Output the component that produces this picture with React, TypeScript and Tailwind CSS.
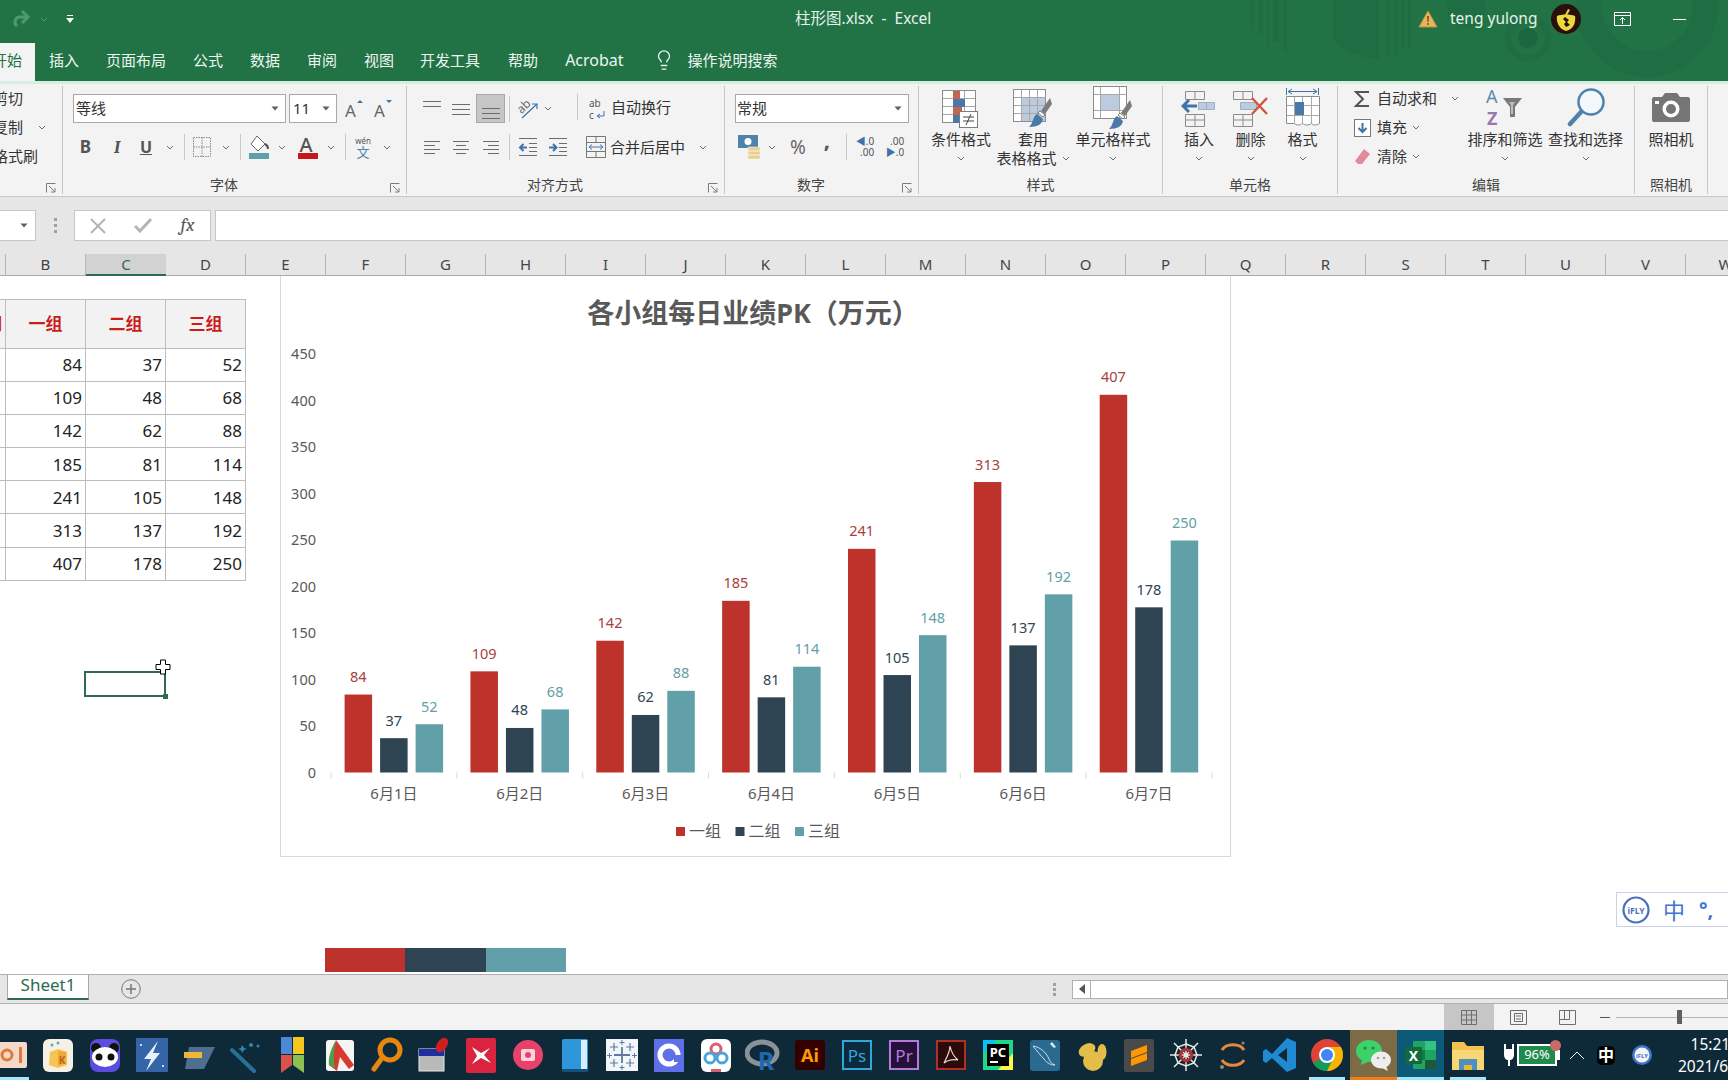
import type { ReactNode } from "react";
import { Lightbulb } from "lucide-react";

const letters = "BCDEFGHIJKLMNOPQRSTUVW".split("");
const rows = [
  [84, 37, 52],
  [109, 48, 68],
  [142, 62, 88],
  [185, 81, 114],
  [241, 105, 148],
  [313, 137, 192],
  [407, 178, 250],
];
const days = ["6月1日", "6月2日", "6月3日", "6月4日", "6月5日", "6月6日", "6月7日"];
const fills = ["#be322c", "#2e4452", "#61a0a8"];
const labelFills = ["#a8403f", "#2e4452", "#61a0a8"];

function Chev() {
  return (
    <svg width="8" height="5" viewBox="0 0 8 5" fill="none" stroke="#6b6b6b" strokeWidth="1" className="shrink-0">
      <path d="M1 1l3 3 3-3" />
    </svg>
  );
}

function Tri() {
  return (
    <svg width="8" height="5" viewBox="0 0 8 5" className="shrink-0">
      <path d="M0.5 0.5h7l-3.5 4z" fill="#5f5f5f" />
    </svg>
  );
}

function Sep() {
  return <span className="h-[26px] w-px shrink-0 bg-[#c8c8c8]" />;
}

function Launcher() {
  return (
    <svg width="10" height="10" viewBox="0 0 10 10" fill="none" stroke="#7a7a7a" className="absolute bottom-[1px] right-[6px]">
      <path d="M0.5 9.5v-9h9" />
      <path d="M3 3l5.5 5.5M9 5v4H5" />
    </svg>
  );
}

function Slot({ className, children }: { className: string; children?: ReactNode }) {
  return <span className={"flex shrink-0 items-center justify-center " + className}>{children}</span>;
}

function Group({
  label,
  className,
  launcher,
  children,
}: {
  label: string;
  className: string;
  launcher?: boolean;
  children: ReactNode;
}) {
  return (
    <div className={"relative flex h-full shrink-0 flex-col border-r border-[#c6c6c6] " + className}>
      <div className="min-h-0 flex-1">{children}</div>
      <div className={"mb-[1px] h-[16px] text-center text-[14px] leading-[16px] text-[#444] " + (launcher ? "pr-[21px]" : "")}>{label}</div>
      {launcher && <Launcher />}
    </div>
  );
}

function Big({ icon, children, className }: { icon: ReactNode; children: ReactNode; className: string }) {
  return (
    <div className={"flex shrink-0 flex-col items-center text-[15px] leading-[19px] text-[#333] " + className}>
      <div className="flex h-[44px] items-center justify-center">{icon}</div>
      {children}
    </div>
  );
}

function AlignV({ lines }: { lines: number[] }) {
  return (
    <svg width="20" height="22" viewBox="0 0 20 22" stroke="#6c6c6c" strokeWidth="1">
      {lines.map((y) => (
        <path key={y} d={`M1 ${y}.5h18`} />
      ))}
    </svg>
  );
}

function AlignH({ d }: { d: string }) {
  return (
    <svg width="16" height="14" viewBox="0 0 16 14" fill="none" stroke="#6c6c6c" strokeWidth="1">
      <path d={d} />
    </svg>
  );
}

function Indent({ flip }: { flip?: boolean }) {
  return (
    <svg width="20" height="20" viewBox="0 0 20 20" fill="none">
      <path d="M1 1.5h18M1 18.5h18M11 6.5h8M11 10.5h8M11 14.5h8" stroke="#6c6c6c" />
      {flip ? (
        <path d="M1 10.5h7M5 7l3.5 3.5L5 14" stroke="#3f74a8" strokeWidth="2" />
      ) : (
        <path d="M9 10.5H2M5.5 7L2 10.5 5.5 14" stroke="#3f74a8" strokeWidth="2" />
      )}
    </svg>
  );
}

function Brush() {
  return (
    <g>
      <path d="M38 12l-9 13 4 3 7-10z" fill="#7b7b7b" />
      <path d="M28 25l5 4-2 2-5-4z" fill="#fff" stroke="#7b7b7b" />
      <path d="M25 28l6 5c-1 5-5 8-14 8 2-2 3-4 4-7 1-3 2-5 4-6z" fill="#4a78a8" />
    </g>
  );
}

function CondIcon() {
  return (
    <svg width="40" height="42" viewBox="0 0 40 42" fill="none">
      <rect x="1.5" y="3.5" width="33" height="32" fill="#fff" stroke="#8c8c8c" />
      <path d="M12.5 4v31M23.5 4v31M2 11.5h32M2 19.5h32M2 27.5h32" stroke="#a8a8a8" />
      <rect x="12" y="4" width="7" height="8" fill="#c2664d" />
      <rect x="12" y="12" width="12" height="8" fill="#4a78a8" />
      <rect x="12" y="20" width="9" height="8" fill="#c2664d" />
      <rect x="12" y="28" width="6" height="8" fill="#4a78a8" />
      <rect x="18.5" y="24.5" width="18" height="16" fill="#fff" stroke="#7c7c7c" />
      <path d="M22 30h11M22 34h11M30 27l-5 11" stroke="#444" />
    </svg>
  );
}

function TableIcon() {
  return (
    <svg width="42" height="44" viewBox="0 0 42 44" fill="none">
      <rect x="1.5" y="3.5" width="32" height="32" fill="#fff" stroke="#8c8c8c" />
      <rect x="9" y="11" width="24" height="24" fill="#bccbde" />
      <path d="M9.5 4v31M17.5 4v31M25.5 4v31M2 11.5h32M2 19.5h32M2 27.5h32" stroke="#a8a8a8" />
      <Brush />
    </svg>
  );
}

function CellIcon() {
  return (
    <svg width="42" height="46" viewBox="0 0 42 46" fill="none">
      <rect x="1.5" y="1.5" width="33" height="32" fill="#fff" stroke="#8c8c8c" />
      <rect x="8" y="9" width="20" height="17" fill="#bccbde" />
      <path d="M8.5 2v31M27.5 2v31M2 9.5h32M2 25.5h32" stroke="#a8a8a8" />
      <g transform="translate(0 3)">
        <Brush />
      </g>
    </svg>
  );
}

function InsertIcon() {
  return (
    <svg width="36" height="40" viewBox="0 0 36 40" fill="none">
      <path d="M4.5 3.5h19v8h-19zM14 4v7M4.5 26.5h19v12h-19zM4.5 32h19M14 27v11" stroke="#8c8c8c" />
      <path d="M17.5 14.5h16v7h-16zM25.5 15v6" fill="#bccbde" stroke="#9fb0c4" />
      <path d="M16 18H3M8 12l-6 6 6 6" stroke="#3f74a8" strokeWidth="3" />
    </svg>
  );
}

function DeleteIcon() {
  return (
    <svg width="38" height="40" viewBox="0 0 38 40" fill="none">
      <path d="M1.5 3.5h19v8h-19zM11 4v7M1.5 26.5h19v12h-19zM1.5 32h19M11 27v11" stroke="#8c8c8c" />
      <path d="M8.5 14.5h16v7h-16z" fill="#bccbde" stroke="#9fb0c4" />
      <path d="M20 10l15 16M35 10L20 26" stroke="#d0573f" strokeWidth="2.5" />
    </svg>
  );
}

function FormatIcon() {
  return (
    <svg width="36" height="42" viewBox="0 0 36 42" fill="none">
      <path d="M1.5 1v7M33.5 1v7M3 4.5h29M7 2L3 4.5 7 7M28 2l4 2.5L28 7" stroke="#3f74a8" />
      <path d="M1.5 9.5h33v27c-3 2-6 2-8 0-3 2-6 2-9 0-3 2-6 2-8 0h-8z" fill="#fff" stroke="#8c8c8c" />
      <path d="M9.5 10v27M17.5 10v27M26.5 10v27M2 18.5h32M2 28.5h32" stroke="#a8a8a8" />
      <rect x="10" y="15" width="9" height="13" fill="#4a78a8" />
    </svg>
  );
}

function SortIcon() {
  return (
    <svg width="40" height="40" viewBox="0 0 40 40">
      <text x="1" y="15" fontSize="18" fill="#5b8bb5">
        A
      </text>
      <text x="2" y="37" fontSize="18" fontWeight="700" fill="#9a78ab">
        Z
      </text>
      <path d="M18 10h19l-7 9v10h-5V19z" fill="#7a7a7a" />
      <path d="M24 14h6l-2 3v9h-2v-9z" fill="#bdbdbd" />
    </svg>
  );
}

function FindIcon() {
  return (
    <svg width="38" height="42" viewBox="0 0 38 42" fill="none">
      <circle cx="24" cy="15" r="12.5" fill="#f3f8fc" stroke="#4f81ad" strokeWidth="2.5" />
      <path d="M14 25L3 37" stroke="#4f81ad" strokeWidth="4.5" strokeLinecap="round" />
    </svg>
  );
}

function CameraIcon() {
  return (
    <svg width="38" height="32" viewBox="0 0 38 32">
      <path d="M2 5h8l3-4h12l3 4h8a2 2 0 0 1 2 2v21a2 2 0 0 1-2 2H2a2 2 0 0 1-2-2V7a2 2 0 0 1 2-2z" fill="#757575" />
      <circle cx="19" cy="17" r="8.5" fill="#fff" />
      <circle cx="19" cy="17" r="5" fill="#757575" />
      <rect x="3" y="9" width="4" height="3" fill="#fff" />
    </svg>
  );
}

function RibbonGroups() {
  return (
    <div className="flex h-[112px] bg-[#f3f3f3] py-[2px] text-[15px] text-[#333]">
      {/* clipboard, cut off by the left window edge */}
      <Group label="" className="w-[63px]" launcher>
        <div className="-ml-[7px] -mt-[2px] whitespace-nowrap leading-[29px]">
          <div className="h-[29px]">剪切</div>
          <div className="flex h-[29px] items-center gap-[15px]">
            复制
            <Chev />
          </div>
          <div className="h-[29px]">格式刷</div>
        </div>
      </Group>

      <Group label="字体" className="w-[344px]" launcher>
        <div className="flex h-[29px] pl-[10px] mt-[8px]">
          <div className="flex w-[213px] items-center justify-between border border-[#a9a9a9] bg-white pl-[2px] pr-[6px]">
            等线
            <Tri />
          </div>
          <div className="ml-[3px] flex w-[48px] items-center justify-between border border-[#a9a9a9] bg-white pl-[3px] pr-[6px]">
            11
            <Tri />
          </div>
          <Slot className="w-[33px]">
            <svg width="18" height="20" viewBox="0 0 18 20">
              <text x="0" y="18" fontSize="17" fill="#666">
                A
              </text>
              <path d="M12 4l3-3 3 3z" fill="#3f74a8" />
            </svg>
          </Slot>
          <Slot className="w-[25px]">
            <svg width="18" height="20" viewBox="0 0 18 20">
              <text x="0" y="18" fontSize="17" fill="#666">
                A
              </text>
              <path d="M12 1l3 3 3-3z" fill="#3f74a8" />
            </svg>
          </Slot>
        </div>
        <div className="mt-[10px] flex h-[28px] pl-[7px]">
          <Slot className="w-[31px] text-[17px] font-bold text-[#555]">B</Slot>
          <Slot className="w-[32px] font-serif text-[18px] font-bold italic text-[#555]">I</Slot>
          <Slot className="w-[26px] text-[16px] font-bold text-[#555] underline">U</Slot>
          <Slot className="w-[22px]">
            <Chev />
          </Slot>
          <Slot className="w-[7px]">
            <Sep />
          </Slot>
          <Slot className="w-[28px]">
            <svg width="18" height="20" viewBox="0 0 18 20" fill="none" stroke="#8a8a8a" strokeDasharray="1.5 1">
              <path d="M0.5 0.5h17v19h-17zM0.5 10h17M9 0.5v19" />
            </svg>
          </Slot>
          <Slot className="w-[19px]">
            <Chev />
          </Slot>
          <Slot className="w-[10px]">
            <Sep />
          </Slot>
          <Slot className="w-[27px]">
            <svg width="22" height="24" viewBox="0 0 22 24" fill="none">
              <path d="M9 1l8 8-7 7-7-7z" fill="#fff" stroke="#666" />
              <path d="M17 9c2 1 3 3 3 5" stroke="#555" strokeWidth="2" />
              <rect x="1" y="18" width="20" height="6" fill="#61a0a8" />
            </svg>
          </Slot>
          <Slot className="w-[19px]">
            <Chev />
          </Slot>
          <Slot className="w-[33px]">
            <svg width="20" height="24" viewBox="0 0 20 24">
              <text x="1.5" y="17" fontSize="20" fontWeight="500" fill="#555">
                A
              </text>
              <rect y="18" width="20" height="6" fill="#c8161d" />
            </svg>
          </Slot>
          <Slot className="w-[14px]">
            <Chev />
          </Slot>
          <Slot className="w-[14px]">
            <Sep />
          </Slot>
          <Slot className="w-[22px]">
            <span className="flex flex-col items-center leading-none">
              <span className="text-[8px] leading-[9px] text-[#555]">wén</span>
              <span className="text-[13px] leading-[14px] text-[#4f81ad]">文</span>
            </span>
          </Slot>
          <Slot className="w-[26px]">
            <Chev />
          </Slot>
        </div>
      </Group>

      <Group label="对齐方式" className="w-[318px]" launcher>
        <div className="mt-[8px] flex h-[29px] pl-[10px]">
          <Slot className="w-[29px]">
            <AlignV lines={[3, 8]} />
          </Slot>
          <Slot className="w-[30px]">
            <AlignV lines={[6, 11, 16]} />
          </Slot>
          <Slot className="w-[29px] border border-[#a9a9a9] bg-[#c6c6c6]">
            <AlignV lines={[10, 15, 20]} />
          </Slot>
          <Slot className="w-[8px]">
            <Sep />
          </Slot>
          <Slot className="w-[30px]">
            <svg width="22" height="22" viewBox="0 0 22 22" fill="none">
              <text x="1" y="12" fontSize="12" fill="#666" transform="rotate(-45 8 10)">
                ab
              </text>
              <path d="M5 20L20 6M15 6h5v5" stroke="#3f74a8" strokeWidth="1.2" />
            </svg>
          </Slot>
          <Slot className="w-[10px]">
            <Chev />
          </Slot>
          <Slot className="w-[24px]" />
          <Sep />
          <Slot className="ml-[5px] w-[28px]">
            <svg width="20" height="22" viewBox="0 0 20 22" fill="none">
              <text x="2" y="9" fontSize="10" fill="#555">
                ab
              </text>
              <text x="2" y="21" fontSize="10" fill="#555">
                c
              </text>
              <path d="M17 13v5h-6M13 16l-3 2 3 2" stroke="#3f74a8" />
            </svg>
          </Slot>
          <span className="leading-[27px]">自动换行</span>
        </div>
        <div className="mt-[10px] flex h-[28px] pl-[10px]">
          <Slot className="w-[29px]">
            <AlignH d="M0 1.5h16M0 5.5h11M0 9.5h16M0 13.5h11" />
          </Slot>
          <Slot className="w-[30px]">
            <AlignH d="M0 1.5h16M3 5.5h10M0 9.5h16M3 13.5h10" />
          </Slot>
          <Slot className="w-[29px]">
            <AlignH d="M0 1.5h16M5 5.5h11M0 9.5h16M5 13.5h11" />
          </Slot>
          <Slot className="w-[8px]">
            <Sep />
          </Slot>
          <Slot className="w-[30px]">
            <Indent />
          </Slot>
          <Slot className="w-[30px]">
            <Indent flip />
          </Slot>
          <Slot className="ml-[9px] w-[28px]">
            <svg width="20" height="22" viewBox="0 0 20 22" fill="none">
              <path d="M0.5 0.5h19v21h-19zM0.5 6.5h19M0.5 15.5h19M10 1v5M10 16v5" stroke="#777" />
              <path d="M3 11h14M6 8.5L3 11l3 2.5M14 8.5l3 2.5-3 2.5" stroke="#3f74a8" />
            </svg>
          </Slot>
          <span className="leading-[28px]">合并后居中</span>
          <Slot className="ml-[14px] w-[8px]">
            <Chev />
          </Slot>
        </div>
      </Group>

      <Group label="数字" className="w-[194px]" launcher>
        <div className="mt-[8px] flex h-[29px] pl-[10px]">
          <div className="flex w-[174px] items-center justify-between border border-[#a9a9a9] bg-white pl-[1px] pr-[6px]">
            常规
            <Tri />
          </div>
        </div>
        <div className="mt-[10px] flex h-[28px] pl-[10px]">
          <Slot className="w-[28px]">
            <svg width="22" height="24" viewBox="0 0 22 24">
              <rect x="0" y="0" width="20" height="13" fill="#4f81ad" />
              <circle cx="10" cy="6.5" r="3.5" fill="#fff" />
              <path d="M10 12h12v4H10zM10 16h12v4H10zM10 20h12v4H10z" fill="#e9cf8a" stroke="#f3f3f3" strokeWidth="0.6" />
            </svg>
          </Slot>
          <Slot className="w-[18px]">
            <Chev />
          </Slot>
          <Slot className="w-[34px] text-[19px] text-[#666]">%</Slot>
          <Slot className="w-[24px] text-[22px] font-bold text-[#555]">
            <span className="-mt-[16px]">,</span>
          </Slot>
          <Slot className="w-[15px]">
            <Sep />
          </Slot>
          <Slot className="w-[22px]">
            <span className="flex flex-col items-end text-[10px] leading-[11px] text-[#555]">
              <span>
                <span className="text-[#3f74a8]">◀</span>.0
              </span>
              <span>.00</span>
            </span>
          </Slot>
          <Slot className="w-[38px]">
            <span className="flex flex-col items-end text-[10px] leading-[11px] text-[#555]">
              <span>.00</span>
              <span>
                <span className="text-[#3f74a8]">▶</span>.0
              </span>
            </span>
          </Slot>
        </div>
      </Group>

      <Group label="样式" className="w-[244px]">
        <div className="flex">
          <Big icon={<CondIcon />} className="w-[84px]">
            <span>条件格式</span>
            <span className="flex h-[19px] items-center">
              <Chev />
            </span>
          </Big>
          <Big icon={<TableIcon />} className="w-[60px]">
            <span>套用</span>
            <span className="flex items-center gap-[5px] whitespace-nowrap">
              表格格式
              <Chev />
            </span>
          </Big>
          <Big icon={<CellIcon />} className="w-[100px]">
            <span>单元格样式</span>
            <span className="flex h-[19px] items-center">
              <Chev />
            </span>
          </Big>
        </div>
      </Group>

      <Group label="单元格" className="w-[175px]">
        <div className="flex pl-[10px]">
          {[
            { t: "插入", i: <InsertIcon />, c: "w-[52px]" },
            { t: "删除", i: <DeleteIcon />, c: "w-[51px]" },
            { t: "格式", i: <FormatIcon />, c: "w-[53px]" },
          ].map((b) => (
            <Big key={b.t} icon={b.i} className={b.c}>
              <span>{b.t}</span>
              <span className="flex h-[19px] items-center">
                <Chev />
              </span>
            </Big>
          ))}
        </div>
      </Group>

      <Group label="编辑" className="w-[297px]">
        <div className="flex">
          <div className="-mt-[2px] w-[129px] shrink-0 pl-[12px]">
            <div className="flex h-[29px] items-center">
              <Slot className="w-[24px]">
                <svg width="16" height="18" viewBox="0 0 16 18" fill="none" stroke="#555" strokeWidth="2">
                  <path d="M15 2H2l7 7-7 7h13" />
                </svg>
              </Slot>
              <span className="ml-[3px]">自动求和</span>
              <Slot className="ml-[14px] w-[8px]">
                <Chev />
              </Slot>
            </div>
            <div className="flex h-[29px] items-center">
              <Slot className="w-[24px]">
                <svg width="17" height="18" viewBox="0 0 17 18" fill="none">
                  <rect x="0.5" y="0.5" width="16" height="17" fill="#fff" stroke="#777" />
                  <path d="M8.5 4v9M4.5 9l4 4 4-4" stroke="#3f74a8" strokeWidth="2" />
                </svg>
              </Slot>
              <span className="ml-[3px]">填充</span>
              <Slot className="ml-[5px] w-[8px]">
                <Chev />
              </Slot>
            </div>
            <div className="flex h-[29px] items-center">
              <Slot className="w-[24px]">
                <svg width="17" height="17" viewBox="0 0 17 17">
                  <path d="M10 1l6 5-8 10H4L1 13z" fill="#e28a9a" />
                </svg>
              </Slot>
              <span className="ml-[3px]">清除</span>
              <Slot className="ml-[5px] w-[8px]">
                <Chev />
              </Slot>
            </div>
          </div>
          <Big icon={<SortIcon />} className="w-[76px] whitespace-nowrap">
            <span>排序和筛选</span>
            <span className="flex h-[19px] items-center">
              <Chev />
            </span>
          </Big>
          <Big icon={<FindIcon />} className="w-[85px] whitespace-nowrap">
            <span>查找和选择</span>
            <span className="flex h-[19px] items-center">
              <Chev />
            </span>
          </Big>
        </div>
      </Group>

      <Group label="照相机" className="w-[73px]">
        <Big icon={<CameraIcon />} className="w-full">
          <span>照相机</span>
        </Big>
      </Group>
    </div>
  );
}

function TitleBar() {
  return (
    <div className="relative h-[81px] overflow-hidden bg-[#217346] text-white">
      {/* decoration of the Office theme, behind the bar */}
      <svg className="absolute right-0 top-0" width="500" height="81" viewBox="1228 0 500 81" fill="#1f6e43">
        <path d="M1251 0h3v30h-3zM1258 0h5v34h-5zM1267 0h2v50h-2zM1273 0h6v42h-6zM1284 0h3v52h-3z" />
        <path d="M1333 0h46v60c-16-2-34-8-46-20z" />
        <path d="M1387 0h3v56h-3zM1394 0h3v56h-3zM1401 0h3v50h-3zM1408 0h3v48h-3z" />
        <path d="M1448 0h36c4 14-4 28-18 28s-22-14-18-28z" />
        <circle cx="1528" cy="38" r="10" fill="#1c6640" />
        <circle cx="1528" cy="38" r="20" fill="none" stroke="#1f6e43" strokeWidth="7" />
        <circle cx="1647" cy="6" r="58" fill="none" stroke="#1f6e43" strokeWidth="26" />
      </svg>
      <div className="relative flex h-[43px] items-center pb-[5px]">
        <Slot className="ml-[9px] w-[24px]">
          <svg width="20" height="18" viewBox="0 0 20 18" fill="none" stroke="#4d9a72" strokeWidth="3">
            <path d="M15 7H9a5 5 0 0 0-3 9" />
            <path d="M11 1l6 6-6 6" />
          </svg>
        </Slot>
        <Slot className="ml-[7px] w-[8px]">
          <svg width="8" height="5" viewBox="0 0 8 5" fill="none" stroke="#4d9a72">
            <path d="M1 1l3 3 3-3" />
          </svg>
        </Slot>
        <Slot className="ml-[17px] w-[10px]">
          <svg width="8" height="8" viewBox="0 0 8 8" fill="#fff">
            <path d="M1 0h6v1H1zM0 3h8L4 8z" />
          </svg>
        </Slot>
        <span className="ml-[720px] w-[137px] whitespace-pre text-[15.5px] text-[#e6f2ea]">柱形图.xlsx  -  Excel</span>
        <Slot className="ml-[484px] w-[24px]">
          <svg width="20" height="18" viewBox="0 0 20 18">
            <path d="M10 1l9 16H1z" fill="#e8b65a" stroke="#c58f37" />
            <path d="M9.2 6h1.6l-.3 6h-1zM9.2 13.2h1.6v1.6H9.2z" fill="#5a4015" />
          </svg>
        </Slot>
        <span className="ml-[10px] w-[88px] whitespace-nowrap text-[15.5px] text-[#e6f2ea]">teng yulong</span>
        <Slot className="ml-[13px] w-[30px]">
          <svg width="30" height="30" viewBox="0 0 30 30">
            <circle cx="15" cy="15" r="15" fill="#2a0f0a" />
            <path d="M6 12c5-2 13-2 18 0 1 6-1 13-9 15-7-2-10-9-9-15z" fill="#ecd93b" />
            <path d="M14 11l3-6 2 1-3 5z" fill="#ecd93b" />
            <path d="M14 13l4 3-2 2 3 3-4 2-2-3 2-2-3-3z" fill="#2a0f0a" />
          </svg>
        </Slot>
        <Slot className="ml-[31px] w-[20px]">
          <svg width="17" height="14" viewBox="0 0 17 14" fill="none" stroke="#fff">
            <path d="M0.5 0.5h16v13h-16zM0.5 3.5h16M8.5 12V6M6 8l2.5-2.5L11 8" />
          </svg>
        </Slot>
        <Slot className="ml-[37px] w-[20px]">
          <span className="h-px w-[13px] bg-white" />
        </Slot>
      </div>
      <div className="relative flex h-[38px] items-center pb-[4px] text-[15px] text-[#eef6f1]">
        <div className="flex h-[38px] w-[35px] items-center justify-end self-start bg-[#f3f3f3] pb-[4px] pr-[13px] text-[#217346]">
          <span className="whitespace-nowrap">开始</span>
        </div>
        <span className="ml-[14px]">插入</span>
        <span className="ml-[27px]">页面布局</span>
        <span className="ml-[27px]">公式</span>
        <span className="ml-[27px]">数据</span>
        <span className="ml-[27px]">审阅</span>
        <span className="ml-[27px]">视图</span>
        <span className="ml-[26px]">开发工具</span>
        <span className="ml-[28px]">帮助</span>
        <span className="ml-[27px] text-[16px]">Acrobat</span>
        <Lightbulb className="ml-[29px] h-[22px] w-[22px]" strokeWidth={1.4} />
        <span className="ml-[13px]">操作说明搜索</span>
      </div>
    </div>
  );
}

function FormulaBar() {
  return (
    <div className="bg-[#e6e6e6]">
      <div className="h-[14px] border-t border-[#c6c6c6]" />
      <div className="flex h-[32px] items-start">
        <div className="flex h-[31px] w-[36px] items-center justify-end border border-l-0 border-[#c6c6c6] bg-white pr-[7px]">
          <Tri />
        </div>
        <Slot className="h-[31px] w-[38px]">
          <span className="flex flex-col gap-[3px]">
            <span className="h-[3px] w-[3px] bg-[#a0a0a0]" />
            <span className="h-[3px] w-[3px] bg-[#a0a0a0]" />
            <span className="h-[3px] w-[3px] bg-[#a0a0a0]" />
          </span>
        </Slot>
        <div className="flex h-[31px] w-[137px] items-center border border-[#c6c6c6] bg-white">
          <Slot className="w-[45px]">
            <svg width="16" height="16" viewBox="0 0 16 16" stroke="#b5b5b5" strokeWidth="2">
              <path d="M1 1l14 14M15 1L1 15" />
            </svg>
          </Slot>
          <Slot className="w-[45px]">
            <svg width="18" height="15" viewBox="0 0 18 15" fill="none" stroke="#b5b5b5" strokeWidth="3">
              <path d="M1 8l5 5L17 1" />
            </svg>
          </Slot>
          <Slot className="w-[45px] font-serif text-[19px] italic text-[#555]">fx</Slot>
        </div>
        <div className="ml-[4px] h-[31px] flex-1 border-y border-l border-[#c6c6c6] bg-white" />
      </div>
      <div className="h-[12px]" />
      <div className="flex h-[22px] border-b border-[#a9a9a9] text-[15px] leading-[21px] text-[#444]">
        <div className="w-[6px] shrink-0 border-r border-[#b5b5b5]" />
        {letters.map((l) =>
          l === "C" ? (
            <div key={l} className="h-[22px] w-[80px] shrink-0 border-b-2 border-[#2f6b4d] bg-[#d2d2d2] text-center text-[#2f6b4d]">
              {l}
            </div>
          ) : (
            <div key={l} className="w-[80px] shrink-0 border-r border-[#b5b5b5] text-center">
              {l}
            </div>
          ),
        )}
      </div>
    </div>
  );
}

function DataTable() {
  const cell = "border-b border-r border-[#bdbdbd]";
  return (
    <div className="mt-[23px] w-[246px] shrink-0 text-[17px] text-[#222]">
      <div className="flex h-[50px] border-t border-[#bdbdbd] bg-[#f2f2f2] text-[17px] font-bold text-[#cc1b1b]">
        <div className={"flex w-[6px] items-center justify-end overflow-hidden pr-[3px] " + cell}>
          <span className="shrink-0">期</span>
        </div>
        {["一组", "二组", "三组"].map((h) => (
          <div key={h} className={"flex w-[80px] items-center justify-center " + cell}>
            {h}
          </div>
        ))}
      </div>
      {rows.map((r) => (
        <div key={r[0]} className="flex h-[33.1px]">
          <div className={"w-[6px] " + cell} />
          {r.map((v, i) => (
            <div key={i} className={"flex w-[80px] items-center justify-end pr-[3px] " + cell}>
              {v}
            </div>
          ))}
        </div>
      ))}
    </div>
  );
}

function Chart() {
  const x0 = 331;
  const base = 772.5;
  const step = 125.85;
  return (
    <div className="absolute left-[280px] top-0 h-[581px] w-[951px] border-x border-b border-[#d9d9d9] bg-white">
      <svg width="951" height="581" viewBox="281 276 951 581" className="block">
        <text x="753" y="323" textAnchor="middle" fontSize="27" fontWeight="700" fill="#595959">
          各小组每日业绩PK（万元）
        </text>
        {[0, 1, 2, 3, 4, 5, 6, 7, 8, 9].map((n) => (
          <text key={n} x="316" y={base - n * 46.5 + 5} textAnchor="end" fontSize="14.5" fill="#595959">
            {n * 50}
          </text>
        ))}
        <path d={`M${x0} ${base}.5H1211`} stroke="#d9d9d9" />
        {[0, 1, 2, 3, 4, 5, 6, 7].map((n) => (
          <path key={n} d={`M${x0 + n * step} ${base}v6`} stroke="#d9d9d9" />
        ))}
        {rows.map((r, i) => (
          <g key={i}>
            {r.map((v, j) => {
              const x = x0 + i * step + 13.6 + j * 35.5;
              const h = v * 0.928;
              return (
                <g key={j}>
                  <rect x={x} y={base - h} width="27.5" height={h} fill={fills[j]} />
                  <text x={x + 13.7} y={base - h - 12.5} textAnchor="middle" fontSize="14.5" fill={labelFills[j]}>
                    {v}
                  </text>
                </g>
              );
            })}
            <text x={x0 + i * step + step / 2} y="799" textAnchor="middle" fontSize="15" fill="#595959">
              {days[i]}
            </text>
          </g>
        ))}
        {["一组", "二组", "三组"].map((t, i) => (
          <g key={t}>
            <rect x={676 + i * 59.5} y="827" width="9" height="9" fill={fills[i]} />
            <text x={689 + i * 59.5} y="837" fontSize="16" fill="#595959">
              {t}
            </text>
          </g>
        ))}
      </svg>
    </div>
  );
}

function Sheet() {
  return (
    <div className="relative flex h-[698px] flex-col overflow-hidden bg-white">
      <DataTable />
      <div className="ml-[325px] mt-[367px] flex h-[24px] w-[241px]">
        <div className="flex-1 bg-[#be322c]" />
        <div className="flex-1 bg-[#2e4452]" />
        <div className="flex-1 bg-[#61a0a8]" />
      </div>
      <Chart />
      {/* selected cell */}
      <div className="absolute left-[84px] top-[395px] h-[26px] w-[82px] border-2 border-[#2f6b4d]" />
      <div className="absolute left-[163px] top-[418px] h-[5px] w-[5px] bg-[#2f6b4d]" />
      {/* mouse cursor */}
      <svg className="absolute left-[155px] top-[383px]" width="16" height="16" viewBox="0 0 16 16">
        <path d="M5.5 1h5v4.5H15v5h-4.5V15h-5v-4.5H1v-5h4.5z" fill="#fff" stroke="#000" />
      </svg>
      {/* floating input-method bar */}
      <div className="absolute left-[1616px] top-[616px] flex h-[35px] w-[130px] items-center border border-[#c9d3e6] bg-white text-[#3f74d0]">
        <svg className="ml-[5px] shrink-0" width="28" height="28" viewBox="0 0 28 28" fill="none">
          <circle cx="14" cy="14" r="12.5" stroke="#4a6fc0" strokeWidth="2.2" />
          <text x="14" y="17.5" textAnchor="middle" fontSize="8.5" fontWeight="700" fill="#4a6fc0">
            iFLY
          </text>
        </svg>
        <span className="ml-[13px] text-[22px] leading-none">中</span>
        <span className="ml-[14px] text-[20px] font-bold leading-none">°,</span>
      </div>
    </div>
  );
}

function SheetTabs() {
  return (
    <div className="flex h-[30px] border-y border-[#b0b0b0] bg-[#e6e6e6]">
      <div className="ml-[7px] flex h-[25px] w-[82px] items-start justify-center border-x border-b-2 border-x-[#a9a9a9] border-b-[#2f6b4d] bg-white text-[17px] leading-[20px] text-[#2f6b4d]">
        Sheet1
      </div>
      <Slot className="ml-[31px] h-[28px] w-[22px]">
        <svg width="20" height="20" viewBox="0 0 20 20" fill="none" stroke="#777">
          <circle cx="10" cy="10" r="9.3" />
          <path d="M10 5v10M5 10h10" strokeWidth="1.5" />
        </svg>
      </Slot>
      <div className="ml-auto flex h-full w-[676px] items-center">
        <span className="ml-[1px] flex flex-col gap-[2px]">
          <span className="h-[3px] w-[3px] bg-[#a0a0a0]" />
          <span className="h-[3px] w-[3px] bg-[#a0a0a0]" />
          <span className="h-[3px] w-[3px] bg-[#a0a0a0]" />
        </span>
        <div className="ml-[16px] flex h-[19px] flex-1 border border-[#b0b0b0] bg-white">
          <Slot className="w-[18px] border-r border-[#b0b0b0]">
            <svg width="6" height="10" viewBox="0 0 6 10">
              <path d="M6 0v10L0 5z" fill="#555" />
            </svg>
          </Slot>
        </div>
      </div>
    </div>
  );
}

function StatusBar() {
  return (
    <div className="flex h-[26px] bg-[#f3f3f3]">
      <div className="ml-auto flex h-full w-[284px] items-center">
        <Slot className="h-full w-[50px] bg-[#c6c6c6]">
          <svg width="16" height="15" viewBox="0 0 16 15" fill="none" stroke="#6e6e6e">
            <path d="M0.5 0.5h15v14h-15zM0.5 5h15M0.5 10h15M5.5 1v13M10.5 1v13" />
          </svg>
        </Slot>
        <Slot className="w-[49px]">
          <svg width="17" height="15" viewBox="0 0 17 15" fill="none" stroke="#6e6e6e">
            <path d="M0.5 0.5h16v14h-16zM4.5 3.5h8v8h-8zM6 6h5M6 9h5" />
          </svg>
        </Slot>
        <Slot className="w-[49px]">
          <svg width="17" height="15" viewBox="0 0 17 15" fill="none" stroke="#6e6e6e">
            <path d="M0.5 0.5h16v14h-16zM0.5 9.5h10V1M5.5 1v8.5" />
          </svg>
        </Slot>
        <span className="ml-[8px] h-px w-[10px] bg-[#555]" />
        <div className="ml-[6px] flex h-px flex-1 items-center bg-[#b5b5b5]">
          <span className="ml-[61px] h-[14px] w-[5px] bg-[#606060]" />
        </div>
      </div>
    </div>
  );
}

/* task bar icons, drawn on a 36 box */
const taskIcons: { key: string; icon: ReactNode; cls?: string; bar?: string }[] = [
  {
    key: "photo",
    bar: "w-[36px] bg-[#a9e6f5]",
    icon: (
      <g>
        <rect x="2" y="5" width="32" height="26" rx="2" fill="#f4d9c8" />
        <circle cx="14" cy="18" r="5" fill="none" stroke="#e07a3c" strokeWidth="3" />
        <rect x="26" y="10" width="3" height="16" fill="#e07a3c" />
      </g>
    ),
  },
  {
    key: "k",
    icon: (
      <g>
        <rect x="3" y="2" width="30" height="33" rx="6" fill="#f6f1e4" />
        <path d="M10 15l8-3 9 3v13l-9 3-9-3z" fill="#f5c451" />
        <path d="M18 14v15l8-3V15z" fill="#eea93a" />
        <circle cx="12" cy="8" r="1.5" fill="#5aa9d6" />
        <circle cx="18" cy="6" r="1.5" fill="#5aa9d6" />
        <text x="22" y="27" fontSize="10" fontWeight="700" fill="#b9641c" textAnchor="middle">
          K
        </text>
      </g>
    ),
  },
  {
    key: "panda",
    icon: (
      <g>
        <rect x="3" y="2" width="30" height="33" rx="8" fill="#5a4de0" />
        <circle cx="9" cy="11" r="5" fill="#111" />
        <circle cx="27" cy="11" r="5" fill="#111" />
        <ellipse cx="18" cy="20" rx="13" ry="10" fill="#fff" />
        <circle cx="12" cy="20" r="3.5" fill="#111" />
        <circle cx="24" cy="20" r="3.5" fill="#111" />
      </g>
    ),
  },
  {
    key: "bolt",
    icon: (
      <g>
        <rect x="2" y="1" width="32" height="34" fill="#3565a8" />
        <path d="M24 4L10 22h7l-5 12 14-18h-7z" fill="#e6eef8" />
        <circle cx="7" cy="8" r="1" fill="#fff" />
        <circle cx="29" cy="29" r="1" fill="#fff" />
      </g>
    ),
  },
  {
    key: "slate",
    icon: (
      <g>
        <path d="M8 10h26l-11 22H4z" fill="#4f6f8f" />
        <rect x="3" y="15" width="18" height="6" fill="#f0b63a" />
      </g>
    ),
  },
  {
    key: "wand",
    icon: (
      <g>
        <path d="M4 13l22 21" stroke="#2a6f96" strokeWidth="4" strokeLinecap="round" />
        <path d="M14 8l2 3 3 1-3 1-2 3-1-3-3-1 3-1z" fill="#2a86b8" />
        <circle cx="23" cy="8" r="2" fill="#2a86b8" />
        <circle cx="30" cy="9" r="1.5" fill="#2a86b8" />
      </g>
    ),
  },
  {
    key: "mark",
    icon: (
      <g>
        <rect x="6" y="0" width="11" height="17" fill="#4d88d8" />
        <rect x="18" y="0" width="11" height="17" fill="#f3c81f" />
        <path d="M6 18h11v10l-11 8z" fill="#d9534a" />
        <path d="M18 18h11v18l-11-8z" fill="#8cc152" />
      </g>
    ),
  },
  {
    key: "fan",
    icon: (
      <g>
        <rect x="4" y="3" width="28" height="31" rx="3" fill="#f5f5f5" />
        <path d="M14 3l18 25-5 4-9-12-3 14-8-6c2-8 5-17 7-25z" fill="#d93a2f" />
        <path d="M14 3C9 12 6 20 7 28l6 3c-2-9-1-19 1-28z" fill="#4aa24a" />
      </g>
    ),
  },
  {
    key: "search",
    icon: (
      <g fill="none" stroke="#e8870f">
        <circle cx="21" cy="13" r="10" strokeWidth="5" />
        <path d="M13 21L5 32" strokeWidth="5" strokeLinecap="round" />
      </g>
    ),
  },
  {
    key: "pin",
    icon: (
      <g>
        <rect x="3" y="12" width="25" height="22" fill="#b9b9b9" stroke="#e7e7e7" />
        <rect x="3" y="12" width="25" height="7" fill="#1f2fa0" />
        <ellipse cx="26" cy="8" rx="5" ry="8" fill="#d11e1e" transform="rotate(35 26 8)" />
      </g>
    ),
  },
  {
    key: "xmind",
    icon: (
      <g>
        <rect x="3" y="1" width="30" height="35" rx="2" fill="#d9233f" />
        <path d="M9 10l9 6 9-5-6 7 7 8-10-5-9 6 5-8z" fill="#fff" />
      </g>
    ),
  },
  {
    key: "pinkcam",
    icon: (
      <g>
        <circle cx="18" cy="18" r="15" fill="#e8426b" />
        <rect x="11" y="12" width="14" height="12" rx="2" fill="#f7d3dc" />
        <circle cx="18" cy="18" r="3" fill="#e8426b" />
      </g>
    ),
  },
  {
    key: "book",
    icon: (
      <g>
        <rect x="5" y="2" width="26" height="33" rx="2" fill="#2e97dc" />
        <path d="M24 3h6v31h-6z" fill="#d9eefb" />
        <rect x="5" y="32" width="26" height="3" fill="#14507c" />
      </g>
    ),
  },
  {
    key: "tableau",
    icon: (
      <g stroke="#5a7ba5">
        <rect x="2" y="2" width="32" height="32" fill="#f2f6f8" stroke="none" />
        <path d="M18 10v16M10 18h16" strokeWidth="1.8" />
        <path d="M10 6v8M6 10h8M26 6v8M22 10h8M10 22v8M6 26h8M26 22v8M22 26h8" strokeWidth="1.2" />
        <path d="M18 3v5M15.5 5.5h5M18 28v5M15.5 30.5h5M5.5 16v5M3 18.5h5M30.5 16v5M28 18.5h5" strokeWidth="1" />
      </g>
    ),
  },
  {
    key: "cloud",
    icon: (
      <g>
        <rect x="3" y="2" width="30" height="33" fill="#5f6fe8" />
        <circle cx="18" cy="18" r="9" fill="none" stroke="#fff" strokeWidth="5" />
        <path d="M23 18h8v7h-8z" fill="#5f6fe8" />
      </g>
    ),
  },
  {
    key: "baidu",
    icon: (
      <g>
        <rect x="3" y="2" width="30" height="33" rx="6" fill="#fff" />
        <circle cx="18" cy="12" r="5" fill="none" stroke="#d9606e" strokeWidth="3" />
        <circle cx="12" cy="21" r="5" fill="none" stroke="#45a6d8" strokeWidth="3" />
        <circle cx="24" cy="21" r="5" fill="none" stroke="#45a6d8" strokeWidth="3" />
        <rect x="13" y="32" width="10" height="3" fill="#d9606e" />
      </g>
    ),
  },
  {
    key: "r",
    icon: (
      <g>
        <ellipse cx="17" cy="16" rx="15" ry="11" fill="none" stroke="#8a9299" strokeWidth="5" />
        <text x="21" y="33" fontSize="25" fontWeight="700" fill="#2066b0" textAnchor="middle">
          R
        </text>
      </g>
    ),
  },
  {
    key: "ai",
    icon: (
      <g>
        <rect x="3" y="3" width="30" height="30" rx="3" fill="#330000" />
        <text x="18" y="25" fontSize="18" fontWeight="700" fill="#ff9a00" textAnchor="middle">
          Ai
        </text>
      </g>
    ),
  },
  {
    key: "ps",
    icon: (
      <g>
        <rect x="4" y="4" width="28" height="28" fill="#0c2a3d" stroke="#31a8d8" strokeWidth="2" />
        <text x="18" y="25" fontSize="17" fill="#31a8d8" textAnchor="middle">
          Ps
        </text>
      </g>
    ),
  },
  {
    key: "pr",
    icon: (
      <g>
        <rect x="4" y="4" width="28" height="28" fill="#25103c" stroke="#b57ad6" strokeWidth="2" />
        <text x="18" y="25" fontSize="17" fill="#b57ad6" textAnchor="middle">
          Pr
        </text>
      </g>
    ),
  },
  {
    key: "acrobat",
    icon: (
      <g fill="none">
        <rect x="4" y="4" width="28" height="28" fill="#2d0a0a" stroke="#b03025" strokeWidth="2" />
        <path d="M17 9c1 5 3 10 8 14-5-1-10 0-14 3 2-4 6-11 6-17z" stroke="#e8d8d8" strokeWidth="1.2" />
      </g>
    ),
  },
  {
    key: "pycharm",
    icon: (
      <g>
        <rect x="3" y="3" width="30" height="30" fill="#21d789" />
        <path d="M33 16v17H18z" fill="#fcf84a" />
        <rect x="3" y="3" width="12" height="12" fill="#07c3f2" />
        <rect x="7" y="7" width="22" height="22" fill="#000" />
        <text x="18" y="20" fontSize="13" fontWeight="700" fill="#fff" textAnchor="middle">
          PC
        </text>
        <rect x="10" y="24" width="8" height="2" fill="#fff" />
      </g>
    ),
  },
  {
    key: "mysql",
    icon: (
      <g>
        <rect x="3" y="3" width="30" height="31" rx="3" fill="#2a6a90" />
        <path d="M6 9c7 1 13 6 16 13 1 3 3 5 6 6-5 0-8-2-11-6-3-3-7-8-11-13z" fill="none" stroke="#cfe0ea" />
        <path d="M25 5l4 5-2 1-4-4z" fill="#dfe8ee" />
      </g>
    ),
  },
  {
    key: "paw",
    icon: (
      <g fill="#e3bd4a">
        <circle cx="19" cy="24" r="10" />
        <ellipse cx="13" cy="13" rx="9" ry="6" transform="rotate(-30 13 13)" />
        <ellipse cx="28" cy="15" rx="4.5" ry="8" />
      </g>
    ),
  },
  {
    key: "sublime",
    icon: (
      <g>
        <rect x="3" y="2" width="30" height="33" rx="2" fill="#4a4a4a" />
        <path d="M26 8L10 14v7l16-6zM10 22l16-6v7l-16 6z" fill="#ff9800" />
      </g>
    ),
  },
  {
    key: "web",
    icon: (
      <g fill="none" stroke="#e8e8e8" strokeWidth="1.5">
        <path d="M18 2v32M2 18h32M6 6l24 24M30 6L6 30" />
        <path d="M18 7l8 3 3 8-3 8-8 3-8-3-3-8 3-8z" />
        <path d="M18 12l4 2 2 4-2 4-4 2-4-2-2-4 2-4z" stroke="#b92f2f" strokeWidth="3" />
      </g>
    ),
  },
  {
    key: "jupyter",
    icon: (
      <g fill="none">
        <path d="M7 13c4-7 18-7 22 0M7 23c4 7 18 7 22 0" stroke="#e9883c" strokeWidth="3" />
        <circle cx="28" cy="6" r="1.5" fill="#8a8a8a" />
        <circle cx="7" cy="30" r="2" fill="#8a8a8a" />
      </g>
    ),
  },
  {
    key: "vscode",
    icon: (
      <g>
        <path d="M25 1l9 4v26l-9 4-15-14-6 5-3-2v-10l3-2 6 5z" fill="#1f8ad2" />
        <path d="M25 11l-9 7 9 7z" fill="#0e2a38" />
      </g>
    ),
  },
  {
    key: "chrome",
    bar: "w-[36px] bg-[#a9e6f5]",
    icon: (
      <g>
        <circle cx="18" cy="18" r="16" fill="#db4437" />
        <path d="M18 18L4 26a16 16 0 0 0 14 8l8-16z" fill="#0f9d58" />
        <path d="M18 18l8 0-8 16a16 16 0 0 0 16-16 16 16 0 0 0-2-8H18z" fill="#f4b400" />
        <circle cx="18" cy="18" r="8" fill="#fff" />
        <circle cx="18" cy="18" r="6" fill="#4285f4" />
      </g>
    ),
  },
  {
    key: "wechat",
    cls: "bg-[#7d6b45]",
    bar: "w-full bg-[#f07d1a]",
    icon: (
      <g>
        <ellipse cx="13" cy="14" rx="13" ry="11" fill="#3ed16a" />
        <path d="M6 22l-1 6 7-3z" fill="#3ed16a" />
        <circle cx="9" cy="11" r="1.6" fill="#1c8a3e" />
        <circle cx="17" cy="11" r="1.6" fill="#1c8a3e" />
        <ellipse cx="25" cy="23" rx="10" ry="8.5" fill="#eeeeee" />
        <path d="M30 29l2 5-6-3z" fill="#eeeeee" />
        <circle cx="22" cy="21" r="1.2" fill="#999" />
        <circle cx="28" cy="21" r="1.2" fill="#999" />
      </g>
    ),
  },
  {
    key: "excel",
    cls: "bg-[#0d5a78]",
    bar: "w-full bg-[#9ae8f7]",
    icon: (
      <g>
        <path d="M10 4h23v28H10z" fill="#21a366" />
        <path d="M22 4h11v9H22z" fill="#33c481" />
        <path d="M10 13h12v10H10z" fill="#107c41" />
        <path d="M22 23h11v9H22z" fill="#185c37" />
        <rect x="2" y="10" width="17" height="17" rx="1" fill="#0f6b3b" />
        <text x="10.5" y="24" fontSize="14" fontWeight="700" fill="#fff" textAnchor="middle">
          X
        </text>
      </g>
    ),
  },
  {
    key: "folder",
    bar: "w-[36px] bg-[#a9e6f5]",
    icon: (
      <g>
        <path d="M2 5h12l3 4h17v24H2z" fill="#f2c14e" />
        <rect x="2" y="13" width="32" height="20" fill="#f7d774" />
        <path d="M9 33V22h18v11h-5v-5h-8v5z" fill="#4f8fc0" />
        <rect x="14" y="28" width="8" height="5" fill="#e8b83c" />
      </g>
    ),
  },
];

function Taskbar() {
  return (
    <div className="flex h-[50px] bg-[#0e2a38] text-white">
      <div className="-ml-[13px] flex">
        {taskIcons.map((t) => (
          <div key={t.key} className={"relative flex h-full w-[47px] shrink-0 items-center justify-center pb-[1px] " + (t.cls ?? "")}>
            <svg width="36" height="36" viewBox="0 0 36 36">
              {t.icon}
            </svg>
            {t.bar && <span className={"absolute bottom-0 h-[3px] " + t.bar} />}
          </div>
        ))}
      </div>
      <div className="flex h-full shrink-0 items-center">
        <Slot className="ml-[12px] w-[12px]">
          <svg width="12" height="22" viewBox="0 0 12 22" fill="#fff">
            <path d="M1 0h2v5h6V0h2v11c0 3-2 5-4 5v6H5v-6c-2 0-4-2-4-5z" />
          </svg>
        </Slot>
        <div className="relative ml-[2px] flex h-[22px] w-[40px] items-center justify-center border-2 border-white bg-[#1f8a4c] text-[13px]">
          96%
          <span className="absolute -right-[6px] -top-[6px] h-[11px] w-[11px] rounded-full bg-[#c96a66]" />
        </div>
        <span className="h-[10px] w-[3px] bg-white" />
        <Slot className="w-[34px]">
          <svg width="16" height="9" viewBox="0 0 16 9" fill="none" stroke="#fff">
            <path d="M1 8l7-7 7 7" />
          </svg>
        </Slot>
        <Slot className="w-[24px]">
          <span className="rounded-[5px] bg-black px-[1px] text-[16px] font-bold leading-[19px]">中</span>
        </Slot>
        <Slot className="w-[48px]">
          <svg width="20" height="20" viewBox="0 0 20 20">
            <circle cx="10" cy="10" r="10" fill="#3f74c8" />
            <circle cx="10" cy="10" r="7.5" fill="#f5f5f5" />
            <text x="10" y="12.5" textAnchor="middle" fontSize="6" fontWeight="700" fill="#3f74c8">
              iFLY
            </text>
          </svg>
        </Slot>
        <div className="ml-[12px] flex shrink-0 flex-col items-center whitespace-nowrap text-[15.5px] leading-[22px]">
          <span>15:21</span>
          <span>2021/6/8</span>
        </div>
      </div>
    </div>
  );
}

export default function App() {
  return (
    <div className="flex h-[1080px] w-[1728px] flex-col overflow-hidden bg-white font-['Noto_Sans','Noto_Sans_CJK_SC',sans-serif]">
      <TitleBar />
      <div className="h-[3px] bg-[#d7efe2]" />
      <RibbonGroups />
      <FormulaBar />
      <Sheet />
      <SheetTabs />
      <StatusBar />
      <Taskbar />
    </div>
  );
}
